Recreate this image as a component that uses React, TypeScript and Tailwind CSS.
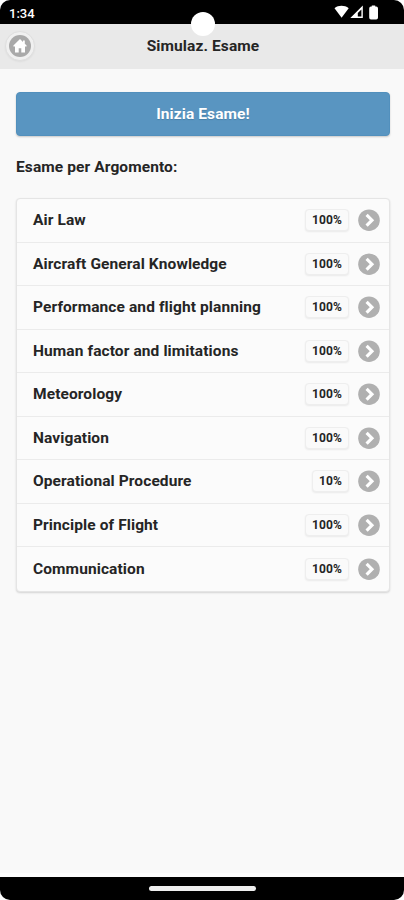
const topics = [
  { name: 'Air Law', score: 100 },
  { name: 'Aircraft General Knowledge', score: 100 },
  { name: 'Performance and flight planning', score: 100 },
  { name: 'Human factor and limitations', score: 100 },
  { name: 'Meteorology', score: 100 },
  { name: 'Navigation', score: 100 },
  { name: 'Operational Procedure', score: 10 },
  { name: 'Principle of Flight', score: 100 },
  { name: 'Communication', score: 100 },
];

function StatusBar() {
  return (
    <div className="relative z-10 flex h-[24px] shrink-0 items-center justify-between rounded-t-[10px] bg-black pr-[26px] pl-[9px] text-white">
      <span className="mt-[2px] text-[13px] leading-none font-medium">1:34</span>
      <svg className="h-[24px] w-[44px]" viewBox="334 0 44 24" fill="currentColor">
        <path d="M334.5 8.2C338.5 5 344.5 5 348.7 8.2L341.6 17.8Z" />
        <path d="M362.8 5.5V18H350.3ZM361.4 9.5V16.6H357.8V13.1Z" fillRule="evenodd" />
        <path d="M371.8 5.5H375.2V6.5H376.2Q378 6.5 378 8.5V17.5Q378 19.5 376.2 19.5H371Q369.2 19.5 369.2 17.5V8.5Q369.2 6.5 371 6.5H371.8Z" />
      </svg>
      {/* camera cutout */}
      <div className="absolute top-[12px] left-[191px] size-[24px] rounded-full bg-white" />
    </div>
  );
}

function Header() {
  return (
    <header className="grid h-[45px] shrink-0 grid-cols-[40px_1fr_38px] items-center bg-[#e9e9e9]">
      <button className="mb-[2px] ml-[5px] flex size-[30px] items-center justify-center rounded-full border border-[#dfdfdf] bg-[#f0f0f0] shadow-[0_1px_2px_rgba(0,0,0,0.05)]">
        <svg className="size-[22px] shrink-0" viewBox="0 0 22 22">
          <circle cx="11" cy="11" r="11" fill="#a9a9a9" />
          <path d="M11 4L4.4 10.6V11.4H6V17.4H9.7V13.2H12.3V17.4H16V11.4H17.6V10.6L15.8 8.8V5.4H14V7Z" fill="#fff" />
        </svg>
      </button>
      <h1 className="pt-px text-center text-[15.5px] font-bold tracking-[0.1px]">Simulaz. Esame</h1>
    </header>
  );
}

function TopicRow({ name, score }: { name: string; score: number }) {
  return (
    <li className="flex h-[43.5px] items-center border-b border-[#ebebeb] pr-[9px] pl-4 last:border-b-0">
      <span className="flex-1 pt-px text-[15.5px] font-bold tracking-[0.1px]">{name}</span>
      <span className="mr-[9px] flex h-[22px] items-center rounded-[4px] border border-[#eeeeee] bg-[#fafafa] px-[6px] text-[12px] font-bold tracking-[0.1px] shadow-[0_1px_2px_rgba(0,0,0,0.07)]">
        {score}%
      </span>
      <svg className="size-[22px]" viewBox="0 0 22 22">
        <circle cx="11" cy="11.2" r="10.8" fill="#b0b0b0" />
        <path d="M8.6 5.8L14 11.2L8.6 16.6" fill="none" stroke="#fff" strokeWidth="3.1" />
      </svg>
    </li>
  );
}

export default function App() {
  return (
    <div className="flex h-[900px] w-[404px] flex-col bg-white font-['Roboto',sans-serif] text-[#252525]">
      <StatusBar />
      <Header />
      <main className="flex-1 border-b-4 border-[#fdfdfd] bg-[#f9f9f9] pr-[14px] pl-4 pt-[23px]">
        <button className="h-[44px] w-full rounded-[4px] border border-[#5290bd] bg-[#5995c1] pt-px text-[15.5px] font-bold tracking-[0.1px] text-white shadow-[0_1px_2px_rgba(0,0,0,0.2)] [text-shadow:0_1px_1px_#4a80a8]">
          Inizia Esame!
        </button>
        <h2 className="mt-[19px] pb-px text-[15.5px] leading-[24px] font-bold tracking-[0.1px]">Esame per Argomento:</h2>
        <ul className="mt-[18px] rounded-[4px] border border-[#e5e5e5] bg-[#fbfbfb] shadow-[0_1px_2px_rgba(0,0,0,0.15)]">
          {topics.map((topic) => (
            <TopicRow key={topic.name} {...topic} />
          ))}
        </ul>
      </main>
      <div className="flex h-[23px] shrink-0 items-center justify-center rounded-b-[10px] bg-black">
        <div className="h-[5px] w-[107px] rounded-full bg-[#eeeeee]" />
      </div>
    </div>
  );
}
